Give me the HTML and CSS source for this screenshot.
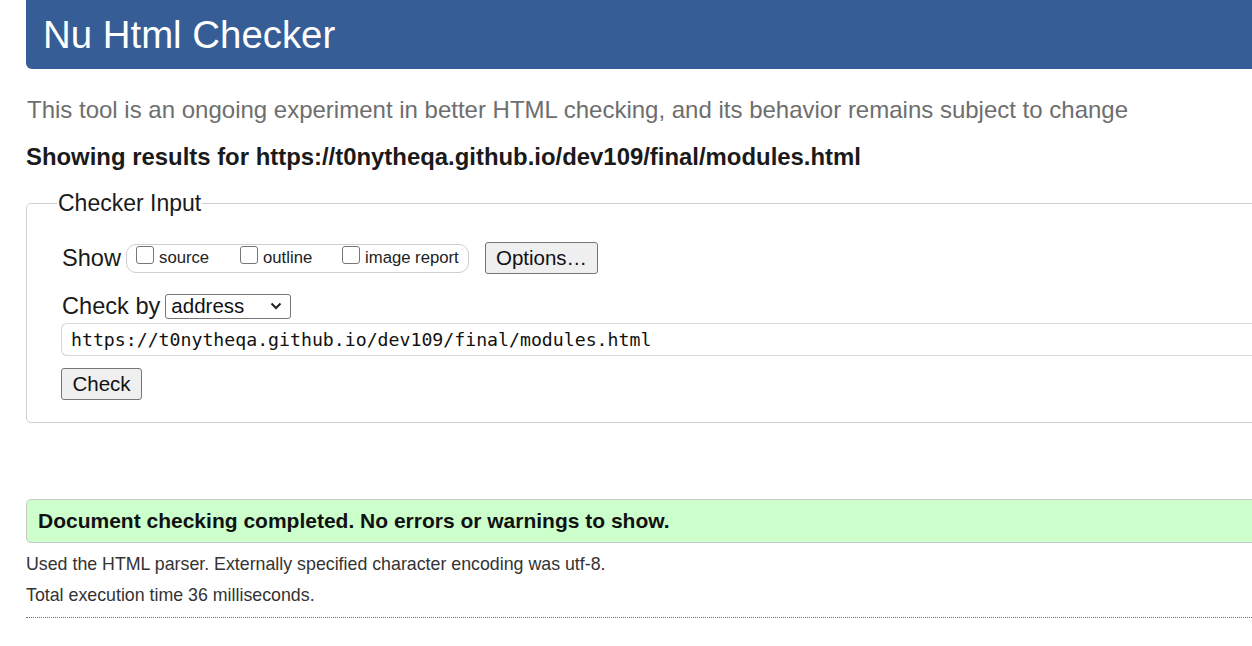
FILE: index.html
```html
<!DOCTYPE html>
<html>
<head>
<meta charset="utf-8">
<title>Nu Html Checker</title>
<link rel="stylesheet" href="styles.css">
</head>
<body>
<div class="page">
  <h1 class="banner">Nu Html Checker</h1>
  <p class="intro">This tool is an ongoing experiment in better HTML checking, and its behavior remains subject to change</p>
  <p class="showing">Showing results for https://t0nytheqa.github.io/dev109/final/modules.html</p>
  <fieldset class="input-box">
    <legend>Checker Input</legend>
    <div class="row show-row">
      <span class="lbl">Show</span>
      <span class="group">
        <label class="opt"><span class="cb"></span>source</label>
        <label class="opt"><span class="cb"></span>outline</label>
        <label class="opt"><span class="cb"></span>image report</label>
      </span>
      <button class="btn options">Options…</button>
    </div>
    <div class="row by-row">
      <span class="lbl">Check by</span>
      <span class="select">address<svg class="chev" width="12" height="8" viewBox="0 0 12 8"><path d="M1.5 1.5 L6 6 L10.5 1.5" fill="none" stroke="#222" stroke-width="2"/></svg></span>
    </div>
    <div class="url">https://t0nytheqa.github.io/dev109/final/modules.html</div>
    <button class="btn check">Check</button>
  </fieldset>
  <div class="success">Document checking completed. No errors or warnings to show.</div>
  <p class="note">Used the HTML parser. Externally specified character encoding was utf-8.</p>
  <p class="note second">Total execution time 36 milliseconds.</p>
  <hr class="dots">
</div>
</body>
</html>
```
FILE: styles.css
```css
html, body {
  margin: 0;
  padding: 0;
  overflow: hidden;
  background: #fff;
}
body {
  font-family: "Liberation Sans", Arial, sans-serif;
  color: #111;
}
.page {
  margin-left: 26px;
  width: 1260px;
}
.banner {
  margin: 0;
  height: 69px;
  background: #365d95;
  color: #fff;
  font-weight: normal;
  font-size: 38.4px;
  line-height: 70px;
  padding-left: 17px;
  border-radius: 0 0 6px 6px;
  box-sizing: border-box;
}
.intro {
  margin: 27px 0 0 1px;
  font-size: 24px;
  line-height: 28px;
  color: #6e6e6e;
}
.showing {
  margin: 19px 0 0 0;
  font-size: 23.9px;
  line-height: 28px;
  font-weight: bold;
  color: #1a1a1a;
}
.input-box {
  margin: 19px 0 0 0;
  padding: 26px 0 0 35px;
  border: 1px solid #cfcfcf;
  border-radius: 5px;
  height: 233px;
  box-sizing: border-box;
}
.input-box legend {
  font-size: 23px;
  margin-left: -5px;
  padding: 0 1px;
  color: #1a1a1a;
}
.row {
  display: flex;
  align-items: center;
}
.lbl {
  font-size: 23.6px;
  color: #1a1a1a;
}
.show-row {
  height: 30px;
  margin-top: 0;
}
.group {
  display: flex;
  align-items: center;
  height: 29px;
  box-sizing: border-box;
  margin-left: 5px;
  width: 343px;
  border: 1px solid #cfcfcf;
  border-radius: 10px;
  padding-left: 9px;
}
.opt {
  display: flex;
  align-items: center;
  font-size: 16.7px;
  color: #222;
  margin-right: 0;
}
.opt:nth-child(1) { width: 104px; }
.opt:nth-child(2) { width: 102px; }
.cb {
  width: 18px;
  height: 18px;
  border: 1px solid #767676;
  border-radius: 3px;
  margin-right: 5px;
  margin-top: -6px;
  box-sizing: border-box;
}
.btn {
  font-family: "Liberation Sans", Arial, sans-serif;
  font-size: 20.5px;
  color: #111;
  background: #efefef;
  border: 1px solid #767676;
  border-radius: 3px;
  padding: 0;
}
.options {
  margin-left: 16px;
  width: 113px;
  height: 32px;
}
.by-row {
  margin-top: 20px;
  height: 26px;
}
.select {
  display: flex;
  align-items: center;
  justify-content: space-between;
  margin-left: 5px;
  width: 126px;
  height: 25px;
  box-sizing: border-box;
  border: 1px solid #767676;
  border-radius: 3px;
  font-size: 20.5px;
  padding: 0 8px 0 5px;
  color: #111;
}
.url {
  margin-top: 4px;
  margin-left: -1px;
  height: 33px;
  box-sizing: border-box;
  border: 1px solid #d6d6d6;
  border-right: none;
  border-radius: 6px 0 0 6px;
  font-family: "DejaVu Sans Mono", "Liberation Mono", monospace;
  font-size: 18.2px;
  line-height: 31px;
  padding-left: 9px;
  color: #111;
}
.check {
  display: block;
  margin-top: 12px;
  margin-left: -1px;
  width: 81px;
  height: 32px;
}
.success {
  margin-top: 76px;
  height: 44px;
  box-sizing: border-box;
  background: #ccffcc;
  border: 1px solid #c8c8c8;
  border-radius: 5px;
  font-weight: bold;
  font-size: 21px;
  line-height: 42px;
  padding-left: 11px;
  color: #111;
}
.note {
  margin: 11px 0 0 0;
  font-size: 17.8px;
  line-height: 21px;
  color: #333;
}
.note.second {
  margin-top: 10px;
}
.dots {
  margin: 11px 0 0 0;
  border: none;
  border-top: 1px dotted #777;
  height: 0;
}
```
